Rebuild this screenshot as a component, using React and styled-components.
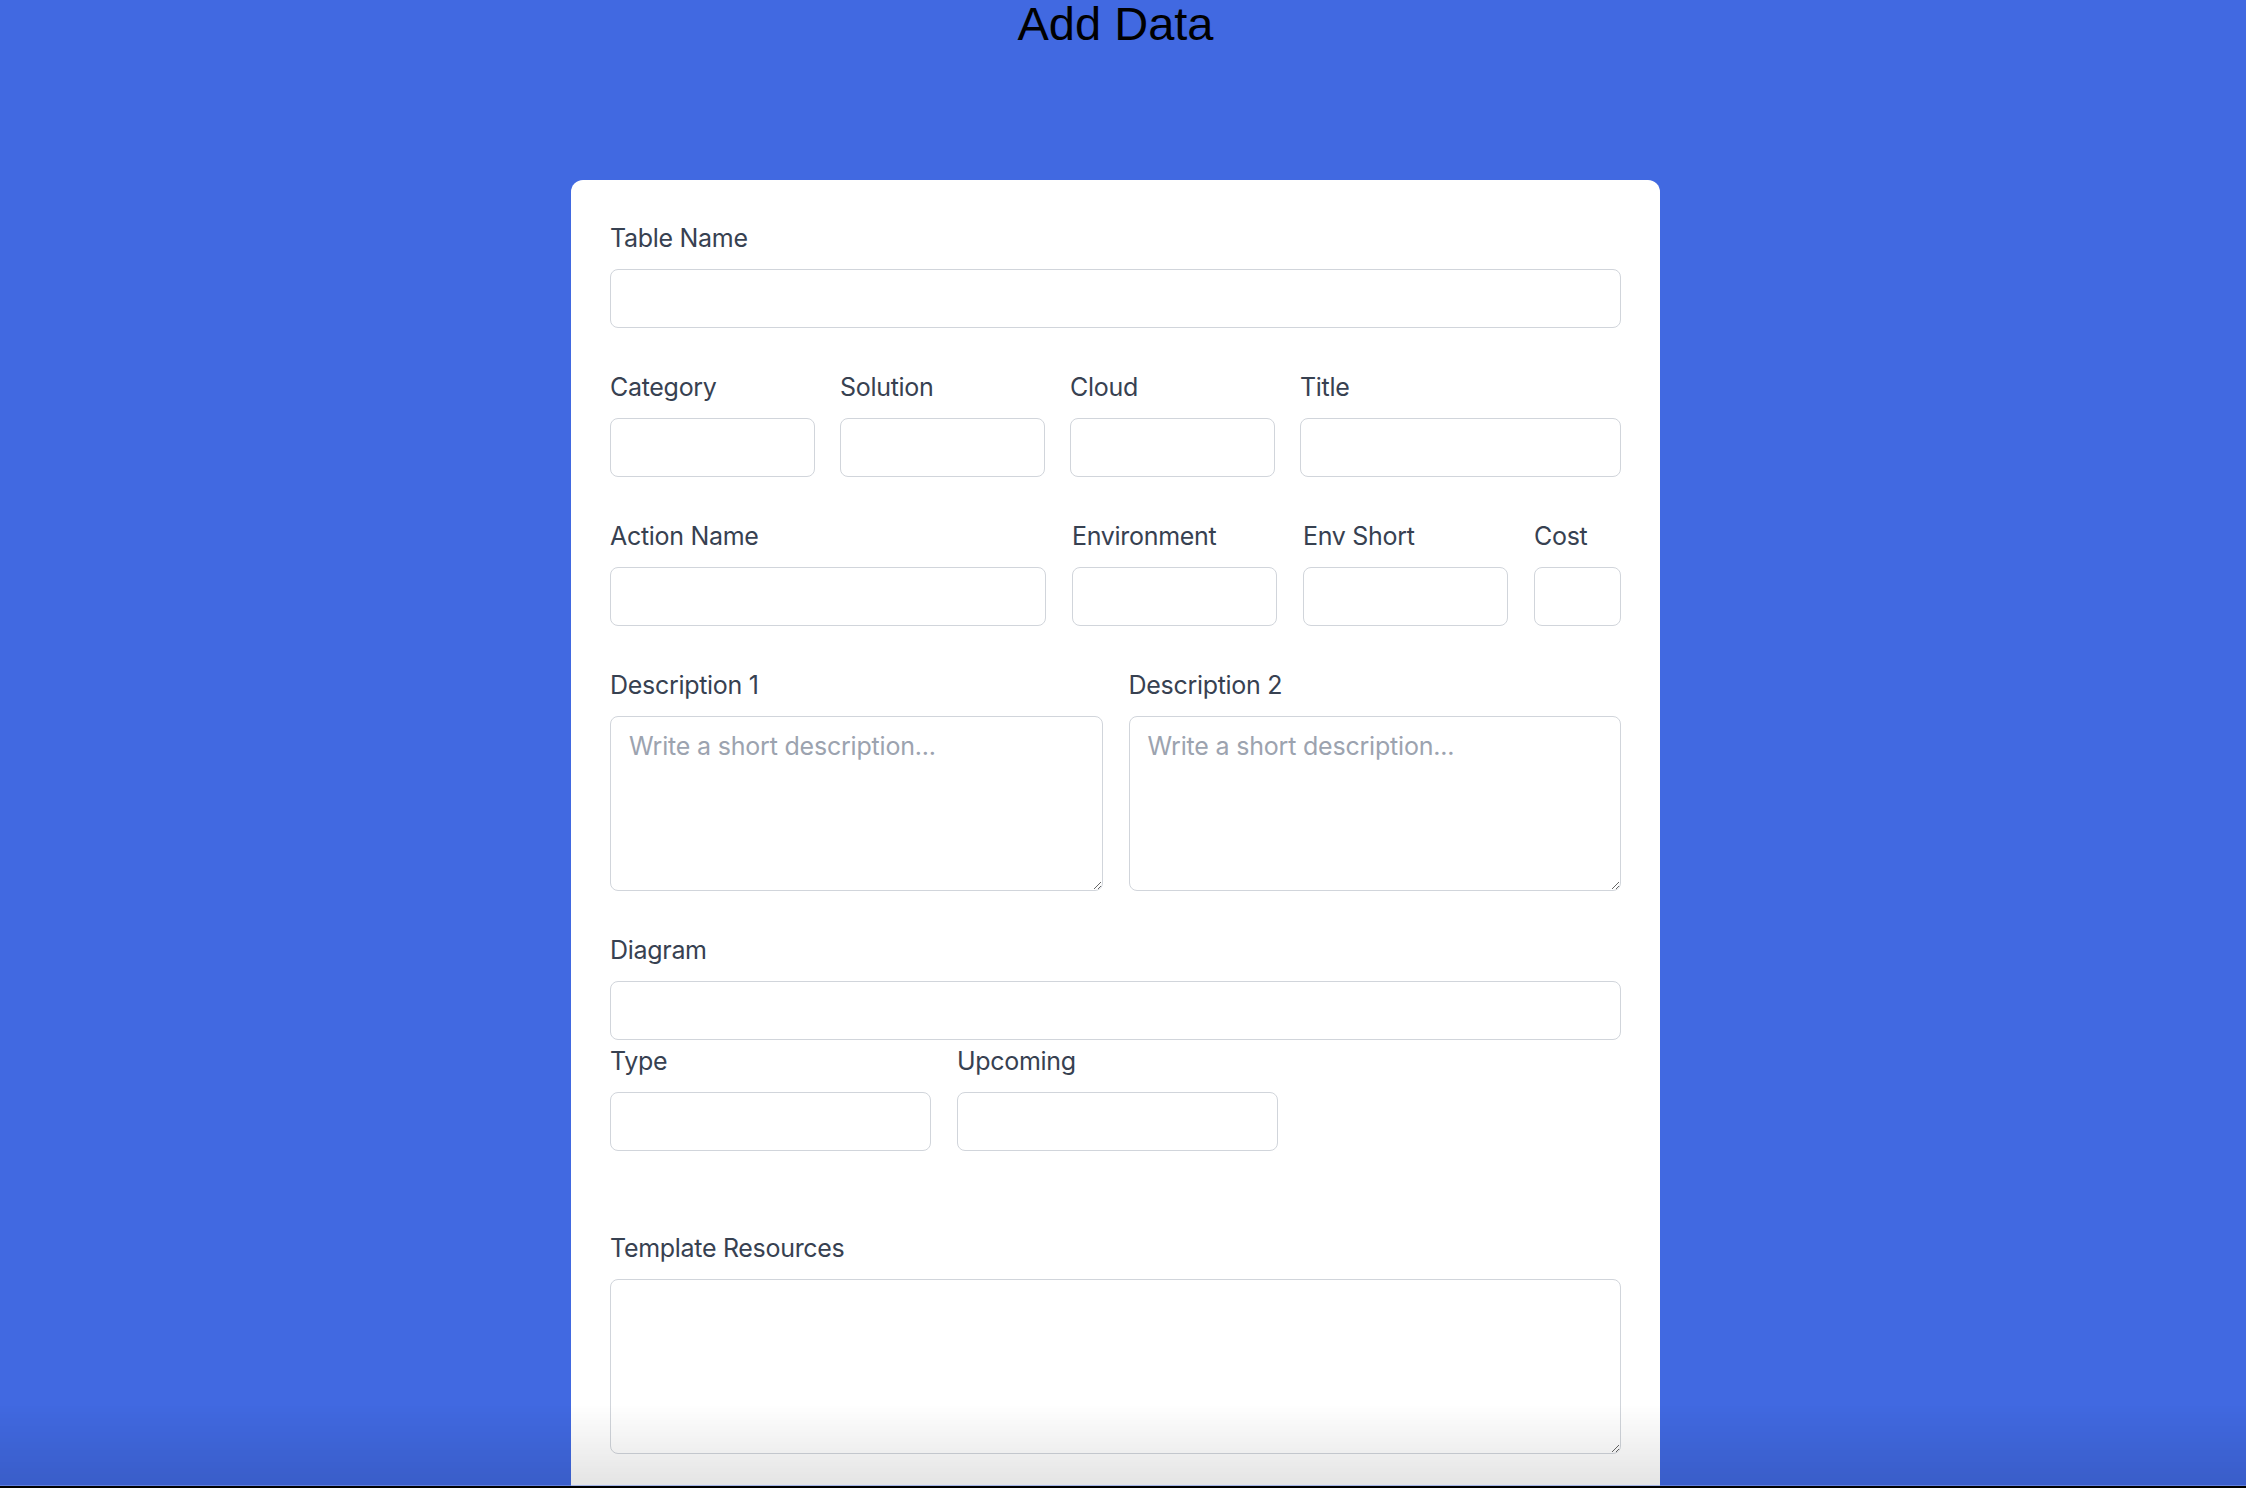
import React from "react";
import styled, { createGlobalStyle } from "styled-components";

const GlobalStyle = createGlobalStyle`
    html, body {
        margin: 0;
        padding: 0;
        background: #4169e1;
        font-family: Inter, "Noto Sans", sans-serif;
    }
`

const Page = styled.div`
    display: flex;
    flex-direction: column;
    align-items: center;
    padding-right: 15px;
    min-height: 1488px;
`

const Title = styled.h1`
    margin: 0;
    font-family: "Liberation Sans", Arial, sans-serif;
    font-size: 47px;
    line-height: 48px;
    font-weight: 400;
    color: #000;
    text-align: center;
`

const Card = styled.form`
    box-sizing: border-box;
    width: 1089px;
    margin-top: 132px;
    padding: 41px 39px 120px;
    background: #fff;
    border-radius: 12px;
`

const Row = styled.div`
    display: grid;
    grid-template-columns: ${(p) => p.$cols || "1fr"};
    column-gap: ${(p) => p.$gap || "26px"};
    margin-bottom: ${(p) => p.$after ?? 42}px;
`

const Label = styled.label`
    display: block;
    font-size: 25px;
    line-height: 35px;
    letter-spacing: -0.3px;
    color: #374151;
    margin-bottom: 13px;
`

const Input = styled.input`
    display: block;
    box-sizing: border-box;
    width: 100%;
    height: 59px;
    padding: 11px 18px;
    border: 1px solid #d1d5db;
    border-radius: 8px;
    background: #fff;
    font: inherit;
    font-size: 25px;
    color: #111827;
    outline: none;
`

const TextArea = styled.textarea`
    display: block;
    box-sizing: border-box;
    width: 100%;
    height: 175px;
    padding: 12px 18px 11px;
    border: 1px solid #d1d5db;
    border-radius: 8px;
    background: #fff;
    font: inherit;
    font-size: 25px;
    line-height: 35px;
    letter-spacing: -0.2px;
    color: #111827;
    outline: none;
    &::placeholder {
        color: #9ca3af;
    }
`

// screenshot shadow at the very bottom edge
const BottomShade = styled.div`
    position: fixed;
    left: 0;
    right: 0;
    bottom: 0;
    height: 84px;
    pointer-events: none;
    background:
        linear-gradient(#000, #000) bottom / 100% 2px no-repeat,
        linear-gradient(rgba(120, 150, 235, 0.6), rgba(120, 150, 235, 0.6)) bottom 2px left 0 / 100% 1px no-repeat,
        linear-gradient(rgba(0, 0, 0, 0), rgba(0, 0, 0, 0.11));
`

const Field = ({ label, area, placeholder }) => (
    <div>
        <Label>{label}</Label>
        {area ? <TextArea placeholder={placeholder} /> : <Input type="text" />}
    </div>
)

const App = () => {
    return (
        <>
            <GlobalStyle />
            <Page>
                <Title>Add Data</Title>
                <Card onSubmit={(e) => e.preventDefault()}>
                    <Row>
                        <Field label="Table Name" />
                    </Row>
                    <Row $cols="205px 205px 205px 1fr" $gap="25px">
                        <Field label="Category" />
                        <Field label="Solution" />
                        <Field label="Cloud" />
                        <Field label="Title" />
                    </Row>
                    <Row $cols="436px 205px 205px 1fr">
                        <Field label="Action Name" />
                        <Field label="Environment" />
                        <Field label="Env Short" />
                        <Field label="Cost" />
                    </Row>
                    <Row $cols="1fr 1fr">
                        <Field label="Description 1" area placeholder="Write a short description..." />
                        <Field label="Description 2" area placeholder="Write a short description..." />
                    </Row>
                    <Row $after={4}>
                        <Field label="Diagram" />
                    </Row>
                    <Row $cols="321px 321px" $after={80}>
                        <Field label="Type" />
                        <Field label="Upcoming" />
                    </Row>
                    <Row>
                        <Field label="Template Resources" area />
                    </Row>
                </Card>
            </Page>
            <BottomShade />
        </>
    )
}

export default App;
